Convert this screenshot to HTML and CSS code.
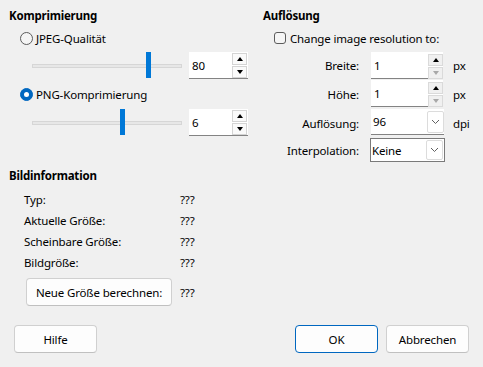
FILE: index.html
```html
<!DOCTYPE html>
<html lang="de">
<head>
<meta charset="utf-8">
<title>Komprimierung</title>
<link rel="stylesheet" href="styles.css">
</head>
<body>
<div class="dialog">
  <div class="top">
    <section class="compress">
      <h2 class="heading">Komprimierung</h2>
      <div class="radio-row"><span class="radio"></span><span>JPEG-Qualität</span></div>
      <div class="slider-row">
        <div class="slider"><div class="track"></div><div class="thumb" style="left:114px"></div></div>
        <div class="spin">
          <span class="spin-value">80</span>
          <div class="spin-btns"><span class="sb"><span class="tri up"></span></span><span class="sb"><span class="tri down"></span></span></div>
        </div>
      </div>
      <div class="radio-row second"><span class="radio checked"></span><span>PNG-Komprimierung</span></div>
      <div class="slider-row second">
        <div class="slider"><div class="track"></div><div class="thumb" style="left:88px"></div></div>
        <div class="spin">
          <span class="spin-value">6</span>
          <div class="spin-btns"><span class="sb"><span class="tri up"></span></span><span class="sb"><span class="tri down"></span></span></div>
        </div>
      </div>
    </section>
    <section class="resolution">
      <h2 class="heading">Auflösung</h2>
      <div class="check-row"><span class="checkbox"></span><span>Change image resolution to:</span></div>
      <div class="form">
        <span class="flabel">Breite:</span>
        <div class="spin rspin">
          <span class="spin-value">1</span>
          <div class="spin-btns"><span class="sb dim"><span class="tri up"></span></span><span class="sb dim"><span class="tri down off"></span></span></div>
        </div>
        <span class="unit">px</span>

        <span class="flabel">Höhe:</span>
        <div class="spin rspin">
          <span class="spin-value">1</span>
          <div class="spin-btns"><span class="sb dim"><span class="tri up"></span></span><span class="sb dim"><span class="tri down off"></span></span></div>
        </div>
        <span class="unit">px</span>

        <span class="flabel">Auflösung:</span>
        <div class="combo">
          <span class="combo-value">96</span>
          <span class="combo-btn"><svg width="9" height="6" viewBox="0 0 9 6"><polyline points="1,1 4.5,4.5 8,1" fill="none" stroke="#606060" stroke-width="1"/></svg></span>
        </div>
        <span class="unit">dpi</span>

        <span class="flabel">Interpolation:</span>
        <div class="combo boxed">
          <span class="combo-value">Keine</span>
          <span class="combo-btn"><svg width="9" height="6" viewBox="0 0 9 6"><polyline points="1,1 4.5,4.5 8,1" fill="none" stroke="#606060" stroke-width="1"/></svg></span>
        </div>
        <span class="unit"></span>
      </div>
    </section>
  </div>

  <section class="info">
    <h2 class="heading">Bildinformation</h2>
    <div class="info-grid">
      <span>Typ:</span><span>???</span>
      <span>Aktuelle Größe:</span><span>???</span>
      <span>Scheinbare Größe:</span><span>???</span>
      <span>Bildgröße:</span><span>???</span>
    </div>
    <div class="calc-row">
      <button class="btn calc">Neue Größe berechnen:</button>
      <span>???</span>
    </div>
  </section>

  <div class="bottom">
    <button class="btn">Hilfe</button>
    <button class="btn ok">OK</button>
    <button class="btn">Abbrechen</button>
  </div>
</div>
</body>
</html>
```

FILE: styles.css
```css
* { box-sizing: border-box; }
html, body {
  margin: 0;
  padding: 0;
  background: #f0f0f0;
}
body {
  font-family: "Noto Sans", "Open Sans", sans-serif;
  font-size: 11.5px;
  letter-spacing: -0.15px;
  color: #000;
}
.dialog {
  width: 483px;
  height: 367px;
  display: flex;
  flex-direction: column;
  overflow: hidden;
}
.top {
  display: flex;
  padding-top: 8px;
}
.heading {
  margin: 0;
  font-size: 11.5px;
  font-weight: 700;
  letter-spacing: -0.2px;
  line-height: 16px;
  height: 16px;
}
.compress {
  width: 263px;
  padding-left: 9px;
}
.radio-row {
  margin-top: 4px;
  height: 20px;
  display: flex;
  align-items: center;
}
.radio-row.second, .slider-row.second { margin-top: 5px; }
.radio {
  width: 13px;
  height: 13px;
  border-radius: 50%;
  border: 1px solid #5c5c5c;
  background: #f5f5f5;
  margin-left: 11px;
  margin-right: 3px;
  flex: none;
  position: relative;
}
.radio.checked {
  background: #0067c0;
  border-color: #0067c0;
}
.radio.checked::after {
  content: "";
  position: absolute;
  left: 3px;
  top: 3px;
  width: 5px;
  height: 5px;
  border-radius: 50%;
  background: #fff;
}
.slider-row {
  margin-top: 4px;
  height: 27px;
  display: flex;
  align-items: flex-start;
}
.slider {
  position: relative;
  width: 150px;
  height: 27px;
  margin-left: 23px;
}
.track {
  position: absolute;
  left: 0;
  top: 12px;
  width: 150px;
  height: 4px;
  border: 1px solid #d6d6d6;
  background: #e7e7e7;
}
.thumb {
  position: absolute;
  top: 0;
  width: 5px;
  height: 26px;
  background: #0078d7;
}
.spin {
  position: relative;
  width: 59px;
  height: 27px;
  margin-left: 7px;
  background: #fff;
  border-bottom: 1px solid #838383;
  display: flex;
  align-items: center;
}
.spin-value {
  padding-left: 3px;
  flex: 1;
}
.spin-btns {
  display: flex;
  flex-direction: column;
  gap: 1px;
  margin-right: 1px;
  align-self: flex-start;
  padding-top: 1px;
}
.sb {
  width: 15px;
  height: 12px;
  border: 1px solid #d4d4d4;
  background: #fafafa;
  display: flex;
  align-items: center;
  justify-content: center;
}
.sb.dim { background: #f0f0f0; border-color: #dadada; }
.tri {
  width: 0;
  height: 0;
  border-left: 3px solid transparent;
  border-right: 3px solid transparent;
}
.tri.up { border-bottom: 4px solid #000; }
.tri.down { border-top: 4px solid #000; }
.tri.down.off { border-top-color: #a8a8a8; }

.resolution {
  flex: 1;
}
.check-row {
  margin-top: 4px;
  height: 20px;
  display: flex;
  align-items: center;
}
.checkbox {
  width: 12px;
  height: 12px;
  border: 1px solid #5c5c5c;
  border-radius: 3px;
  background: #f5f5f5;
  margin-left: 11px;
  margin-right: 4px;
  flex: none;
}
.form {
  margin-top: 4px;
  display: grid;
  grid-template-columns: 96px 73px auto;
  grid-template-rows: 27px 28px 28px 24px;
  column-gap: 12px;
  row-gap: 1px;
}
.flabel {
  justify-self: end;
  align-self: center;
}
.unit {
  align-self: center;
  margin-left: -3px;
}
.form .spin {
  margin-left: 0;
  width: 72px;
  height: 27px;
}
.form .spin .spin-btns { margin-right: 0; padding-top: 2px; }
.combo {
  width: 73px;
  height: 26px;
  background: #fff;
  border-bottom: 1px solid #838383;
  display: flex;
  align-items: center;
}
.combo.boxed {
  height: 24px;
  margin-left: -1px;
  width: 75px;
  border: 1px solid #7a7a7a;
}
.combo-value {
  flex: 1;
  padding-left: 2px;
}
.combo.boxed .combo-value { padding-left: 1px; }
.combo-btn {
  width: 17px;
  height: 22px;
  border: 1px solid #dcdcdc;
  border-radius: 2px;
  display: flex;
  align-items: center;
  justify-content: center;
  margin-right: 0;
}
.combo.boxed .combo-btn { height: 20px; margin-right: 1px; }

.info {
  margin-top: 6px;
  padding-left: 9px;
}
.info-grid {
  margin-top: 5px;
  display: grid;
  grid-template-columns: 156px auto;
  grid-auto-rows: 21px;
  align-items: center;
  padding-left: 15px;
}
.calc-row {
  margin-top: 5px;
  display: flex;
  align-items: center;
  padding-left: 17px;
  gap: 8px;
}
.btn {
  height: 28px;
  width: 83px;
  font-family: inherit;
  font-size: 11.5px;
  letter-spacing: -0.15px;
  color: #000;
  background: #fdfdfd;
  border: 1px solid #d0d0d0;
  border-bottom-color: #c0c0c0;
  border-radius: 4px;
  padding: 0;
}
.btn.calc { width: 146px; }
.bottom {
  margin-top: auto;
  display: flex;
  padding: 0 14px 14px;
  gap: 8px;
}
.btn.ok {
  margin-left: auto;
  border-color: #0067c0;
}
```
